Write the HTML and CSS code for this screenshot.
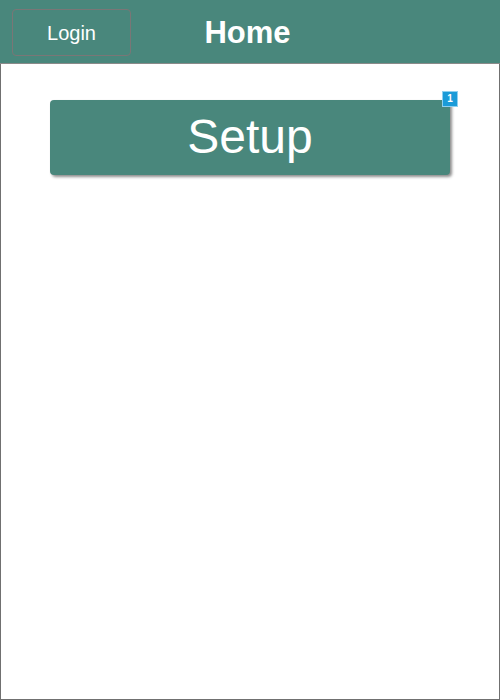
FILE: index.html
```html
<!DOCTYPE html>
<html>
<head>
<meta charset="utf-8">
<link rel="stylesheet" href="styles.css">
</head>
<body>
<div class="frame">
  <header class="topbar">
    <button class="login">Login</button>
    <h1 class="title">Home</h1>
  </header>
  <main class="content">
    <div class="setup-wrap">
      <button class="setup">Setup</button>
      <span class="badge">1</span>
    </div>
  </main>
</div>
</body>
</html>
```
FILE: styles.css
```css
html, body {
  margin: 0;
  padding: 0;
  background: #ffffff;
}
.frame {
  width: 500px;
  height: 700px;
  box-sizing: border-box;
  border: 1px solid #707070;
  border-top: none;
  display: flex;
  flex-direction: column;
  font-family: "Liberation Sans", Arial, sans-serif;
}
.topbar {
  margin: 0 -1px;
  height: 63px;
  border-bottom: 1px solid #8a8a8a;
  background: #49877c;
  display: flex;
  align-items: center;
  position: relative;
  padding-left: 12px;
}
.login {
  width: 119px;
  height: 47px;
  margin-top: 1px;
  box-sizing: border-box;
  border: 1px solid #7a7676;
  border-radius: 4px;
  background: transparent;
  color: #ffffff;
  font-family: "Liberation Sans", Arial, sans-serif;
  font-size: 20px;
  padding: 3px 0 0 0;
}
.title {
  position: absolute;
  left: 0;
  right: 5px;
  top: 0;
  margin: 0;
  line-height: 66px;
  text-align: center;
  color: #ffffff;
  font-size: 31px;
  font-weight: bold;
  pointer-events: none;
}
.content {
  flex: 1;
  display: flex;
  flex-direction: column;
  align-items: center;
  padding-top: 36px;
}
.setup-wrap {
  position: relative;
}
.setup {
  width: 400px;
  height: 75px;
  border: none;
  border-radius: 4px;
  background: #49877c;
  color: #ffffff;
  font-family: "Liberation Sans", Arial, sans-serif;
  font-size: 48px;
  padding: 0 0 2px 0;
  box-shadow: 2px 2px 3px rgba(0, 0, 0, 0.45);
  display: block;
}
.badge {
  position: absolute;
  top: -9px;
  right: -8px;
  width: 16px;
  height: 16px;
  box-sizing: border-box;
  background: #1b9bd8;
  border: 1px solid #8fd0f0;
  color: #ffffff;
  font-size: 10px;
  font-weight: bold;
  line-height: 14px;
  text-align: center;
}
```
